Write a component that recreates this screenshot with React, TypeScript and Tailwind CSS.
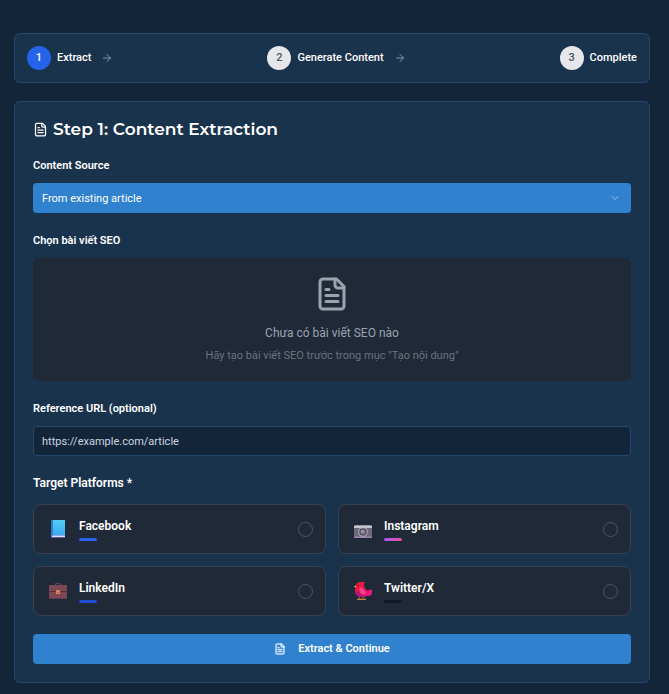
import { ArrowRight, ChevronDown } from "lucide-react";
import type { ReactNode } from "react";

function DocumentIcon({ className, strokeWidth = 2 }: { className: string; strokeWidth?: number }) {
  return (
    <svg
      viewBox="0 0 24 24"
      className={className}
      fill="none"
      stroke="currentColor"
      strokeWidth={strokeWidth}
      strokeLinecap="round"
      strokeLinejoin="round"
      aria-hidden="true"
    >
      <path d="M15 2H6a2 2 0 0 0-2 2v16a2 2 0 0 0 2 2h12a2 2 0 0 0 2-2V7Z" />
      <path d="M14 2v4a2 2 0 0 0 2 2h4" />
      <path d="M10 9H8" />
      <path d="M16 13H8" />
      <path d="M16 17H8" />
    </svg>
  );
}

function BookIcon() {
  return (
    <svg viewBox="0 0 18 18" className="size-[18px]" aria-hidden="true">
      <defs>
        <linearGradient id="cover" x1="0" y1="0" x2="0" y2="1">
          <stop offset="0" stopColor="#4fd0f5" />
          <stop offset="1" stopColor="#3fa8f0" />
        </linearGradient>
      </defs>
      <path d="M2 1Q2 0 3 0H16v18H3Q2 18 2 17z" fill="#2f7fc4" />
      <path d="M4 0h12v15H4z" fill="url(#cover)" />
      <path d="M3 15.500H16v1.500H3z" fill="#e3dcf3" />
      <path d="M3 17H16v1H3z" fill="#5a59b8" />
    </svg>
  );
}

function CameraIcon() {
  return (
    <svg viewBox="0 0 18 18" className="size-[18px]" aria-hidden="true">
      <path d="M2 5h3v1H2zM13 5h3v1h-3zM5.500 6L7 5h4l1.500 1z" fill="#77727f" />
      <rect y="5.500" width="18" height="12.500" rx="1" fill="#6f6878" />
      <path d="M0 6.500Q0 5.500 1 5.500h16q1 0 1 1V8H0z" fill="#c9c5cf" />
      <path d="M0 16.500h18v.5q0 1-1 1H1q-1 0-1-1z" fill="#9a86ad" />
      <circle cx="9" cy="12" r="4.800" fill="#b6b0bd" />
      <circle cx="9" cy="12" r="3.800" fill="#4c4656" />
      <circle cx="9" cy="12" r="2.500" fill="#857c95" />
      <circle cx="8.200" cy="11.200" r="1" fill="#b3acc0" />
    </svg>
  );
}

function BriefcaseIcon() {
  return (
    <svg viewBox="0 0 18 18" className="size-[18px]" aria-hidden="true">
      <path d="M6.500 4V2.500q0-1 1-1h3q1 0 1 1V4" fill="none" stroke="#6d3f48" strokeWidth="1.200" />
      <rect y="3" width="18" height="14" rx="1" fill="#7c4854" />
      <path d="M0 9h18v1H0z" fill="#5a3145" />
      <path d="M0 16h18q0 1-1 1H1q-1 0-1-1z" fill="#64374a" />
      <rect x="7" y="8" width="4" height="4" rx=".5" fill="#d98752" />
      <path d="M8 10h2v1H8z" fill="#a8603f" />
    </svg>
  );
}

function BirdIcon() {
  return (
    <svg viewBox="0 0 18 18" className="size-[18px]" aria-hidden="true">
      <defs>
        <linearGradient id="plumage" x1="0" y1="0" x2="1" y2="1">
          <stop offset="0" stopColor="#ee1d2f" />
          <stop offset=".5" stopColor="#e91555" />
          <stop offset="1" stopColor="#f0149a" />
        </linearGradient>
      </defs>
      <path d="M2.500 3L0 4.500l2 1.500z" fill="#f2b233" />
      <path d="M5.500 13.500v3M9 13.500v3" stroke="#a5683c" strokeWidth="1.200" />
      <path d="M3 17.300h4.500M7.500 17.300H12" stroke="#c58440" strokeWidth="1.200" />
      <path
        d="M2 4Q2.500 0 6.500 0h4.500Q9.500 2 10 4q.5 2.500 3 4.500l5-1q.3 3-.8 6L12.500 14q-2 1-5 1Q1.500 14.500 1 10 .8 7 2 4z"
        fill="url(#plumage)"
      />
      <path d="M6 5q4 1 6 6.500-4 2-6-1Q5 8 6 5z" fill="#f7408a" />
      <path d="M1 10q.5 4.500 6.500 5 2.500 0 4-.7Q6 13.500 4.500 9z" fill="#a81a78" />
      <circle cx="4.200" cy="3.600" r=".6" fill="#4c1130" />
    </svg>
  );
}

const steps = ["Extract", "Generate Content", "Complete"];

const platforms: { name: string; bar: string; icon: ReactNode }[] = [
  { name: "Facebook", bar: "bg-[#2563eb]", icon: <BookIcon /> },
  { name: "Instagram", bar: "bg-linear-to-r from-[#a855f7] to-[#ec4899]", icon: <CameraIcon /> },
  { name: "LinkedIn", bar: "bg-[#1d4ed8]", icon: <BriefcaseIcon /> },
  { name: "Twitter/X", bar: "bg-[#111827]", icon: <BirdIcon /> },
];

const labelClass = "mt-[19px] mb-2 block text-[11px] leading-[18px] font-semibold";

export default function App() {
  return (
    <main className="min-h-screen bg-[#132539] pt-[33px] pr-[19px] pb-[11px] pl-3.5 font-['Roboto','Noto_Sans',sans-serif] text-[11px] leading-[18px] text-white">
      <ol className="flex items-center justify-between rounded-md border border-[#24486c] bg-[#1a334c] p-3">
        {steps.map((step, i) => (
          <li key={step} className="flex items-center">
            <span
              className={
                i === 0
                  ? "flex size-6 items-center justify-center rounded-full bg-[#2563eb] font-medium"
                  : "flex size-6 items-center justify-center rounded-full bg-[#e5e7eb] font-medium text-[#4b5563]"
              }
            >
              {i + 1}
            </span>
            <span className="ml-1.5 font-medium">{step}</span>
            {i < steps.length - 1 && <ArrowRight className="ml-2.5 size-3 text-[#8b95a3]" aria-hidden="true" />}
          </li>
        ))}
      </ol>

      <form
        className="mt-[18px] rounded-md border border-[#24486c] bg-[#1a334c] p-[18px]"
        onSubmit={(e) => e.preventDefault()}
      >
        <h1 className="flex items-center gap-[5px] font-['Montserrat','Inter',sans-serif] text-[17px] leading-[18px] font-semibold">
          <DocumentIcon className="size-[15px]" />
          Step 1: Content Extraction
        </h1>

        <label htmlFor="source" className={labelClass}>
          Content Source
        </label>
        <div className="relative">
          <select
            id="source"
            className="block h-[30px] w-full appearance-none rounded bg-[#3182ce] px-[9px] pt-px text-[11px] text-white"
          >
            <option>From existing article</option>
          </select>
          <ChevronDown
            className="pointer-events-none absolute top-[9px] right-2.5 size-3 text-white/50"
            aria-hidden="true"
          />
        </div>

        <h2 className={labelClass}>Chọn bài viết SEO</h2>
        <div className="flex flex-col items-center rounded-md bg-[#1f2937] px-[18px] pt-[18px] pb-4 text-center">
          <DocumentIcon className="size-9 text-[#9ca3af]" />
          <p className="mt-[11px] text-[12px] leading-[21px] text-[#9ca3af]">Chưa có bài viết SEO nào</p>
          <p className="mt-[3px] text-[#6b7280]">
            Hãy tạo bài viết SEO trước trong mục "Tạo nội dung"
          </p>
        </div>

        <label htmlFor="url" className={labelClass}>
          Reference URL (optional)
        </label>
        <input
          id="url"
          type="url"
          placeholder="https://example.com/article"
          className="block h-[30px] w-full rounded border border-[#24486c] bg-[#132539] px-2 text-[11px] placeholder:text-[#cbd5e0]"
        />

        <fieldset className="mt-[18px]">
          <legend className="text-[12px] leading-[18px] font-semibold">Target Platforms *</legend>
          <div className="mt-3 grid grid-cols-2 gap-3">
            {platforms.map((p) => (
              <label
                key={p.name}
                className="flex items-center rounded-lg border border-[#374151] bg-[#1f2937] p-3"
              >
                <span className="flex w-6 justify-center">{p.icon}</span>
                <span className="ml-[9px] flex-1">
                  <span className="block text-[12px] leading-[18px] font-semibold">{p.name}</span>
                  <span className={`mt-[3px] block h-[3px] w-[18px] rounded-full ${p.bar}`} />
                </span>
                <input
                  type="checkbox"
                  className="size-[15px] appearance-none rounded-full border border-[#4b5563] checked:bg-[#3182ce]"
                />
              </label>
            ))}
          </div>
        </fieldset>

        <button
          type="submit"
          className="mt-[18px] flex h-[30px] w-full items-center justify-center gap-3 rounded bg-[#3182ce] text-[11px] font-semibold"
        >
          <DocumentIcon className="size-3 text-white/75" strokeWidth={3} />
          Extract &amp; Continue
        </button>
      </form>
    </main>
  );
}
